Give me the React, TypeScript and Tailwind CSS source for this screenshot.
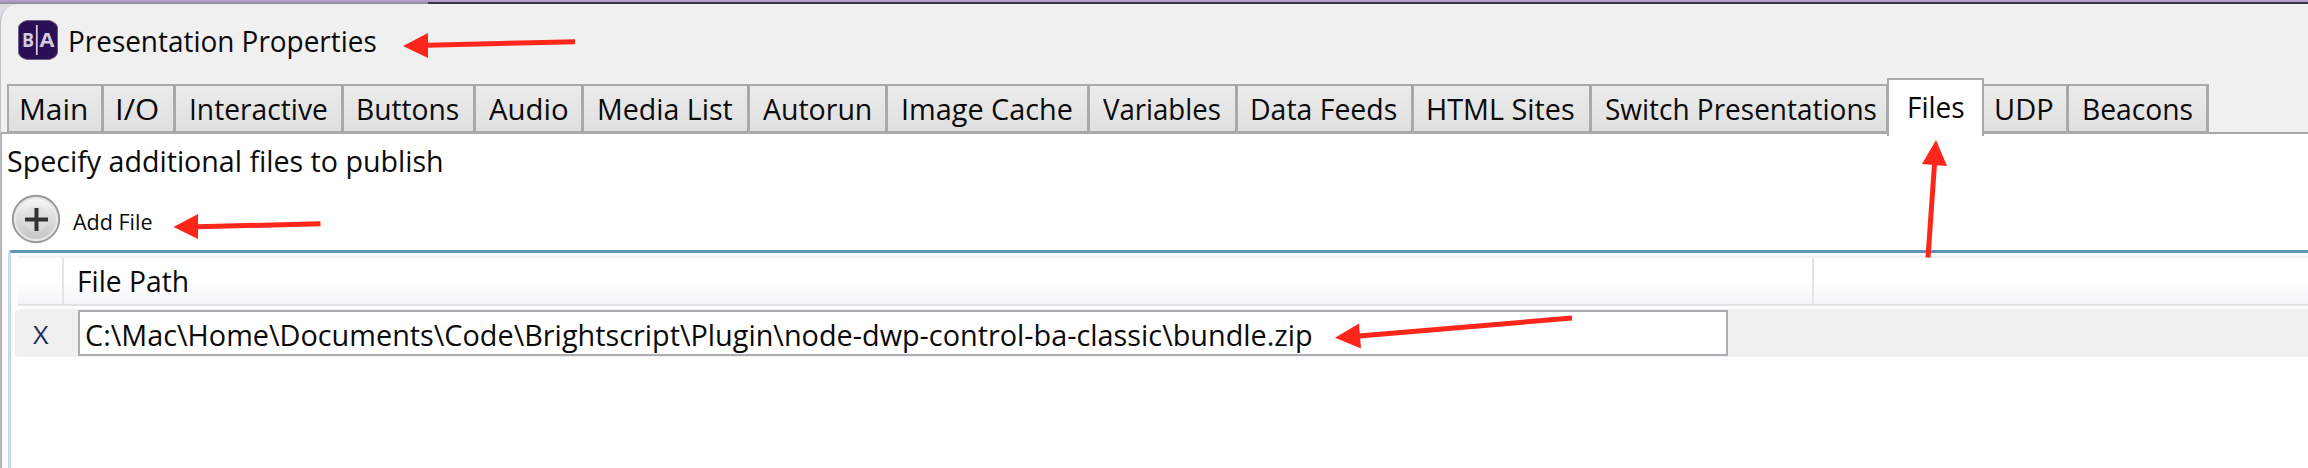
import { useLayoutEffect, useRef } from "react";
import clsx from "clsx";

/** One line of text, condensed horizontally so that its advance equals `width`. */
function FitText({ text, width, className }: { text: string; width: number; className?: string }) {
  const ref = useRef<HTMLSpanElement>(null);
  useLayoutEffect(() => {
    const el = ref.current;
    if (el) el.style.transform = `scaleX(${width / el.offsetWidth})`;
  }, [text, width]);
  return (
    <span className="block shrink-0" style={{ width }}>
      <span ref={ref} className={clsx("inline-block origin-left whitespace-nowrap", className)}>
        {text}
      </span>
    </span>
  );
}

type Tab = { label: string; width: number; pad: number; text: number };

const leftTabs: Tab[] = [
  { label: "Main", width: 95, pad: 10, text: 69 },
  { label: "I/O", width: 72, pad: 11, text: 44 },
  { label: "Interactive", width: 168, pad: 13, text: 139 },
  { label: "Buttons", width: 132, pad: 12, text: 103 },
  { label: "Audio", width: 108, pad: 13, text: 80 },
  { label: "Media List", width: 166, pad: 13, text: 136 },
  { label: "Autorun", width: 138, pad: 13, text: 109 },
  { label: "Image Cache", width: 202, pad: 13, text: 172 },
  { label: "Variables", width: 148, pad: 13, text: 118 },
  { label: "Data Feeds", width: 176, pad: 12, text: 147 },
  { label: "HTML Sites", width: 178, pad: 12, text: 149 },
  { label: "Switch Presentations", width: 297, pad: 13, text: 272 },
];
const rightTabs: Tab[] = [
  { label: "UDP", width: 85, pad: 10, text: 60 },
  { label: "Beacons", width: 140, pad: 13, text: 111 },
];

function TabItem({ tab }: { tab: Tab }) {
  return (
    <div
      className="mt-[6px] h-[49px] shrink-0 border-t-2 border-r-[3px] border-b-2 border-[#a9a9a9] bg-linear-to-b from-[#ececec] to-[#dfdfdf] pt-[3px]"
      style={{ width: tab.width, paddingLeft: tab.pad }}
    >
      <FitText text={tab.label} width={tab.text} className="text-[29px] leading-[40px]" />
    </div>
  );
}

function AppIcon() {
  return (
    <svg width="40" height="40" viewBox="0 0 40 40" className="shrink-0">
      <path d="M9 0.5H31Q38 2 39.5 7V33Q38 38 31 39.5H9Q2 38 0.5 33V7Q2 2 9 0.5Z" fill="#2a0f55" stroke="#6d5c8c" strokeWidth="1" />
      <text x="4" y="27" fontSize="19" fontWeight="700" fill="#d2cae0" fontFamily="Open Sans, sans-serif" textLength="12" lengthAdjust="spacingAndGlyphs">B</text>
      <text x="21.5" y="27" fontSize="19" fontWeight="700" fill="#d2cae0" fontFamily="Open Sans, sans-serif" textLength="15" lengthAdjust="spacingAndGlyphs">A</text>
      <path d="M18.8 5V35" stroke="#d2cae0" strokeWidth="1.8" />
    </svg>
  );
}

function AddIcon() {
  return (
    <svg width="50" height="50" viewBox="0 0 50 50" className="shrink-0">
      <defs>
        <linearGradient id="face" x1="0" y1="0" x2="0" y2="1">
          <stop offset="0" stopColor="#f4f4f4" />
          <stop offset="1" stopColor="#c6c6c6" />
        </linearGradient>
      </defs>
      <circle cx="25" cy="25" r="23.2" fill="#e8e8e8" stroke="#999" strokeWidth="2" />
      <circle cx="25" cy="25" r="20" fill="url(#face)" />
      <circle cx="25" cy="25" r="12.5" fill="#dedede" opacity="0.6" />
      <path d="M14 25.5H37M25.5 14V37" stroke="#333" strokeWidth="4" />
    </svg>
  );
}

const arrows = [
  { head: "403,46 428,33 428,58", line: [427, 45.3, 575, 41.7] },
  { head: "173.5,227 198,214 198,239", line: [197, 226.8, 320.5, 223.8] },
  { head: "1936,140 1922,164 1947,166", line: [1934.5, 164, 1928, 257.5] },
  { head: "1335,337.7 1359,323.5 1361,348.5", line: [1359, 336, 1572, 318] },
];

export default function App() {
  return (
    <div className="relative h-[468px] w-[2308px] overflow-hidden bg-[#dcdce2] font-['Open_Sans',sans-serif] text-[#0a0a0a]">
      <div className="h-[2px] bg-[#b49ad0]" />
      <div className="flex h-[2px]">
        <div className="w-[428px] bg-[#96919a]" />
        <div className="grow bg-[#3b3542]" />
      </div>
      <div className="h-[464px] rounded-tl-[18px] border-l border-[#c0c0c4] bg-[#f0f0f0]">
        <div className="flex h-[74px] pt-4 pl-[17px]">
          <AppIcon />
          <FitText text="Presentation Properties" width={309} className="ml-[10px] text-[29px] leading-[42px]" />
        </div>
        <div className="flex h-[56px]">
          <div className="w-[6px] shrink-0" />
          <div className="mt-[6px] h-[49px] w-[2px] shrink-0 bg-[#a9a9a9]" />
          {leftTabs.map((t) => (
            <TabItem key={t.label} tab={t} />
          ))}
          <div className="z-10 ml-[-2px] h-[58px] w-[97px] shrink-0 border-x-2 border-t-2 border-[#a9a9a9] bg-white pt-[7px] pl-[18px]">
            <FitText text="Files" width={58} className="text-[29px] leading-[40px]" />
          </div>
          {rightTabs.map((t) => (
            <TabItem key={t.label} tab={t} />
          ))}
        </div>
        <div className="-mt-[2px] h-[336px] border-t-2 border-l border-[#a9a9a9] bg-white">
          <div className="h-[60px] pt-[7px] pl-[5px]">
            <FitText text="Specify additional files to publish" width={437} className="text-[29px] leading-[40px]" />
          </div>
          <div className="flex h-[56px] pl-[9px]">
            <AddIcon />
            <FitText text="Add File" width={80} className="ml-[12px] text-[21.5px] leading-[56px]" />
          </div>
          <div className="ml-[6px] h-[218px] rounded-tl-[4px] border-t-[3px] border-l-[3px] border-t-[#5f94bd] border-l-[#c5dcea] pt-[3px] pl-[4px]">
            <div className="ml-[3px] flex h-[50px] border-t-2 border-b-2 border-t-[#f2f2f2] border-b-[#e2e3e4] bg-linear-to-b from-white from-50% to-[#f3f5f7]">
              <div className="w-[46px] shrink-0 border-r-2 border-[#e4e4e4]" />
              <div className="w-[1750px] shrink-0 border-r-2 border-[#e4e4e4] pt-[3px] pl-[13px]">
                <FitText text="File Path" width={112} className="text-[29px] leading-[40px]" />
              </div>
            </div>
            <div className="mt-[3px] flex h-[48px] rounded-l-[4px] bg-[#f0f0f0]">
              <div className="w-[63px] shrink-0 pt-[5px] pl-[18px] text-[#1f2a5a]">
                <FitText text="X" width={15} className="text-[25px] leading-[40px]" />
              </div>
              <div className="mt-px h-[46px] w-[1650px] shrink-0 border-2 border-[#abadb3] bg-white pt-[3px] pl-[5px]">
                <FitText
                  text="C:\Mac\Home\Documents\Code\Brightscript\Plugin\node-dwp-control-ba-classic\bundle.zip"
                  width={1228}
                  className="text-[29px] leading-[40px]"
                />
              </div>
            </div>
          </div>
        </div>
      </div>
      <svg className="pointer-events-none absolute inset-0 z-20" width="2308" height="468" viewBox="0 0 2308 468">
        {arrows.map((a) => (
          <g key={a.head} fill="#fd261b" stroke="#fd261b">
            <polygon points={a.head} stroke="none" />
            <line x1={a.line[0]} y1={a.line[1]} x2={a.line[2]} y2={a.line[3]} strokeWidth="5" />
          </g>
        ))}
      </svg>
    </div>
  );
}
